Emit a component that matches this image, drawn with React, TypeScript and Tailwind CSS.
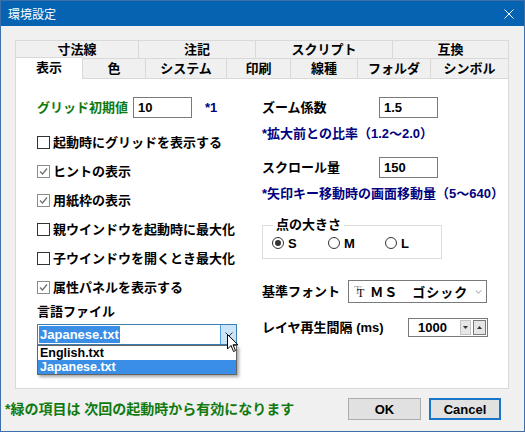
import React from "react";

const topTabs = [
  { label: "寸法線", w: "w-[123px]" },
  { label: "注記", w: "w-[117px]" },
  { label: "スクリプト", w: "w-[137px]" },
  { label: "互換", w: "w-[117px]" },
];

const bottomTabs = [
  { label: "表示", w: "w-[67px]", selected: true },
  { label: "色", w: "w-[63px]" },
  { label: "システム", w: "w-[81px]" },
  { label: "印刷", w: "w-[64px]" },
  { label: "線種", w: "w-[67px]" },
  { label: "フォルダ", w: "w-[73px]" },
  { label: "シンボル", w: "w-[79px]" },
];

function Check({ checked, label }: { checked?: boolean; label: string }) {
  return (
    <div className="flex h-[29px] items-center">
      <span
        className={`flex h-[13px] w-[13px] shrink-0 items-center justify-center border bg-white ${
          checked ? "border-[#8c8c8c]" : "border-[#333333]"
        }`}
      >
        {checked && (
          <svg viewBox="0 0 11 11" className="h-[11px] w-[11px]">
            <path d="M2 5.5 L4.5 8 L9 2.5" fill="none" stroke="#707070" strokeWidth="1.3" />
          </svg>
        )}
      </span>
      <span className="ml-[3px]">{label}</span>
    </div>
  );
}

function Radio({ on, label, w }: { on?: boolean; label: string; w: string }) {
  return (
    <div className={`flex items-center ${w}`}>
      <span className="flex h-[12px] w-[12px] items-center justify-center rounded-full border border-[#333333] bg-white">
        {on && <span className="h-[6px] w-[6px] rounded-full bg-[#333333]" />}
      </span>
      <span className="ml-[4px] font-['Liberation_Sans',sans-serif]">{label}</span>
    </div>
  );
}

export default function App() {
  return (
    <div className="flex h-[432px] w-[525px] flex-col overflow-hidden border border-[#3d6fa8] bg-[#f0f0f0] font-['Liberation_Sans','Noto_Sans_CJK_JP',sans-serif] text-[13px] font-bold leading-none text-black">
      {/* title bar */}
      <div className="flex h-[25px] shrink-0 items-center justify-between bg-[#0563b2] pl-[7px] pr-[10px] text-[12px] font-normal text-white">
        <span className="font-['Noto_Sans_CJK_JP',sans-serif]">環境設定</span>
        <svg viewBox="0 0 10 10" className="h-[10px] w-[10px]">
          <path d="M0.5 0.5 L9.5 9.5 M9.5 0.5 L0.5 9.5" stroke="white" strokeWidth="1" />
        </svg>
      </div>

      {/* tabs + panel */}
      <div className="px-[14px] pt-[14px]">
        <div className="flex h-[18px] w-[494px]">
          {topTabs.map((t) => (
            <div
              key={t.label}
              className={`${t.w} flex items-center justify-center border-l border-t border-[#d9d9d9] bg-[#f0f0f0] last:border-r`}
            >
              {t.label}
            </div>
          ))}
        </div>
        <div className="relative z-10 flex h-[20px] w-[494px]">
          {bottomTabs.map((t) =>
            t.selected ? (
              <div
                key={t.label}
                className={`${t.w} -mb-px -mt-px flex items-center justify-center border-l border-t border-[#d9d9d9] bg-white pb-[2px]`}
              >
                {t.label}
              </div>
            ) : (
              <div
                key={t.label}
                className={`${t.w} flex items-center justify-center border-l border-t border-[#d9d9d9] bg-[#f0f0f0] last:border-r`}
              >
                {t.label}
              </div>
            )
          )}
        </div>

        <div className="relative flex h-[311px] w-[494px] border border-[#d9d9d9] bg-white">
          {/* left column */}
          <div className="relative w-[246px] pl-[21px] pt-[18px]">
            <div className="flex h-[21px] items-center">
              <span className="w-[96px] text-[#107a10]">グリッド初期値</span>
              <span className="flex h-[21px] w-[59px] items-center border border-[#7a7a7a] bg-white pl-[4px] font-['Liberation_Sans',sans-serif]">
                10
              </span>
              <span className="ml-[13px] text-[#000080]">*1</span>
            </div>
            <div className="mt-[10px]">
              <Check label="起動時にグリッドを表示する" />
              <Check checked label="ヒントの表示" />
              <Check checked label="用紙枠の表示" />
              <Check label="親ウインドウを起動時に最大化" />
              <Check label="子ウインドウを開くとき最大化" />
              <Check checked label="属性パネルを表示する" />
            </div>
            <div className="flex h-[18px] items-center">言語ファイル</div>
            <div className="relative mt-[4px] w-[200px]">
              <div className="flex h-[21px] items-center border border-[#3c7fb1] bg-white">
                <span className="ml-px bg-[#3a8ee6] px-[1px] py-[2px] font-['Liberation_Sans',sans-serif] text-white">
                  Japanese.txt
                </span>
                <span className="ml-auto flex h-full w-[16px] items-center justify-center border-l border-[#569de5] bg-[#cce4f7]">
                  <svg viewBox="0 0 8 5" className="h-[5px] w-[8px]">
                    <path d="M0.5 0.5 L4 4 L7.5 0.5" fill="none" stroke="#333" strokeWidth="1" />
                  </svg>
                </span>
              </div>
              {/* open list */}
              <div className="absolute left-0 top-[21px] z-20 w-[200px] border border-[#646464] bg-white font-['Liberation_Sans',sans-serif] shadow-[2px_2px_3px_rgba(0,0,0,0.35)]">
                <div className="flex h-[14px] items-center pl-[2px] text-[12.5px]">English.txt</div>
                <div className="flex h-[14px] items-center bg-[#3a8ee6] pl-[2px] text-[12.5px] text-white">Japanese.txt</div>
              </div>
              {/* mouse pointer */}
              <svg viewBox="0 0 12 19" className="absolute left-[190px] top-[10px] z-30 h-[19px] w-[12px]">
                <path
                  d="M0.5 0.5 L0.5 15 L4 11.5 L6.5 17.5 L8.5 16.6 L6 10.8 L11 10.8 Z"
                  fill="white"
                  stroke="black"
                  strokeWidth="1"
                  strokeLinejoin="round"
                />
              </svg>
            </div>
          </div>

          {/* right column */}
          <div className="flex-1 pt-[18px]">
            <div className="flex h-[21px] items-center">
              <span className="w-[117px]">ズーム係数</span>
              <span className="flex h-[21px] w-[59px] items-center border border-[#7a7a7a] bg-white pl-[4px] font-['Liberation_Sans',sans-serif]">
                1.5
              </span>
            </div>
            <div className="mt-[7px] flex h-[16px] items-center text-[#000080]">*拡大前との比率（1.2〜2.0）</div>
            <div className="mt-[16px] flex h-[21px] items-center">
              <span className="w-[117px]">スクロール量</span>
              <span className="flex h-[21px] w-[59px] items-center border border-[#7a7a7a] bg-white pl-[4px] font-['Liberation_Sans',sans-serif]">
                150
              </span>
            </div>
            <div className="mt-[7px] flex h-[16px] items-center text-[#000080]">*矢印キー移動時の画面移動量（5〜640）</div>

            <fieldset className="mt-[16px] w-[180px] border border-[#dcdcdc] pb-[7px]">
              <legend className="ml-[10px] px-[3px] leading-[16px]">点の大きさ</legend>
              <div className="mt-[2px] flex h-[16px] items-center pl-[9px]">
                <Radio on label="S" w="w-[56px]" />
                <Radio label="M" w="w-[57px]" />
                <Radio label="L" w="w-[40px]" />
              </div>
            </fieldset>

            <div className="mt-[21px] flex h-[23px] items-center">
              <span className="w-[86px]">基準フォント</span>
              <span className="flex h-[23px] w-[139px] items-center border border-[#7a7a7a] bg-white pl-[8px]">
                <span className="mr-[6px] mt-[2px] font-['Liberation_Serif',serif] text-[12px] font-normal [text-shadow:-3px_-3px_0_#a0a0a0]">
                  T
                </span>
                <span className="font-['Noto_Sans_CJK_JP',sans-serif] tracking-[1px] text-black">ＭＳ　ゴシック</span>
                <svg viewBox="0 0 8 5" className="ml-auto mr-[4px] h-[4px] w-[7px]">
                  <path d="M0.5 0.5 L4 4 L7.5 0.5" fill="none" stroke="#777" strokeWidth="1" />
                </svg>
              </span>
            </div>

            <div className="mt-[15px] flex h-[19px] items-center">
              <span className="w-[146px]">レイヤ再生間隔 (ms)</span>
              <span className="flex h-[19px] w-[80px] items-center border border-[#7a7a7a] bg-white pl-[9px] font-['Liberation_Sans',sans-serif]">
                1000
                <span className="ml-auto flex h-[15px] w-[11px] items-center justify-center border border-[#c4c4c4] bg-[#e6e6e6]">
                  <svg viewBox="0 0 5 3" className="h-[3px] w-[5px]">
                    <path d="M0 0 L5 0 L2.5 3 Z" fill="#333" />
                  </svg>
                </span>
                <span className="ml-[2px] mr-[1px] flex h-[15px] w-[13px] items-center justify-center border border-[#7a7a7a] bg-[#e6e6e6]">
                  <svg viewBox="0 0 5 3" className="h-[3px] w-[5px]">
                    <path d="M0 3 L5 3 L2.5 0 Z" fill="#333" />
                  </svg>
                </span>
              </span>
            </div>
          </div>
        </div>
      </div>

      {/* footer */}
      <div className="mt-[9px] flex items-center pl-[4px] pr-[23px]">
        <span className="text-[14px] text-[#107a10]">*緑の項目は 次回の起動時から有効になります</span>
        <button className="ml-auto flex h-[22px] w-[73px] items-center justify-center border border-[#adadad] bg-[#e1e1e1] font-['Liberation_Sans',sans-serif]">
          OK
        </button>
        <button className="ml-[8px] flex h-[22px] w-[72px] items-center justify-center border-2 border-[#1a75c8] bg-[#e1e1e1] font-['Liberation_Sans',sans-serif]">
          Cancel
        </button>
      </div>
    </div>
  );
}
